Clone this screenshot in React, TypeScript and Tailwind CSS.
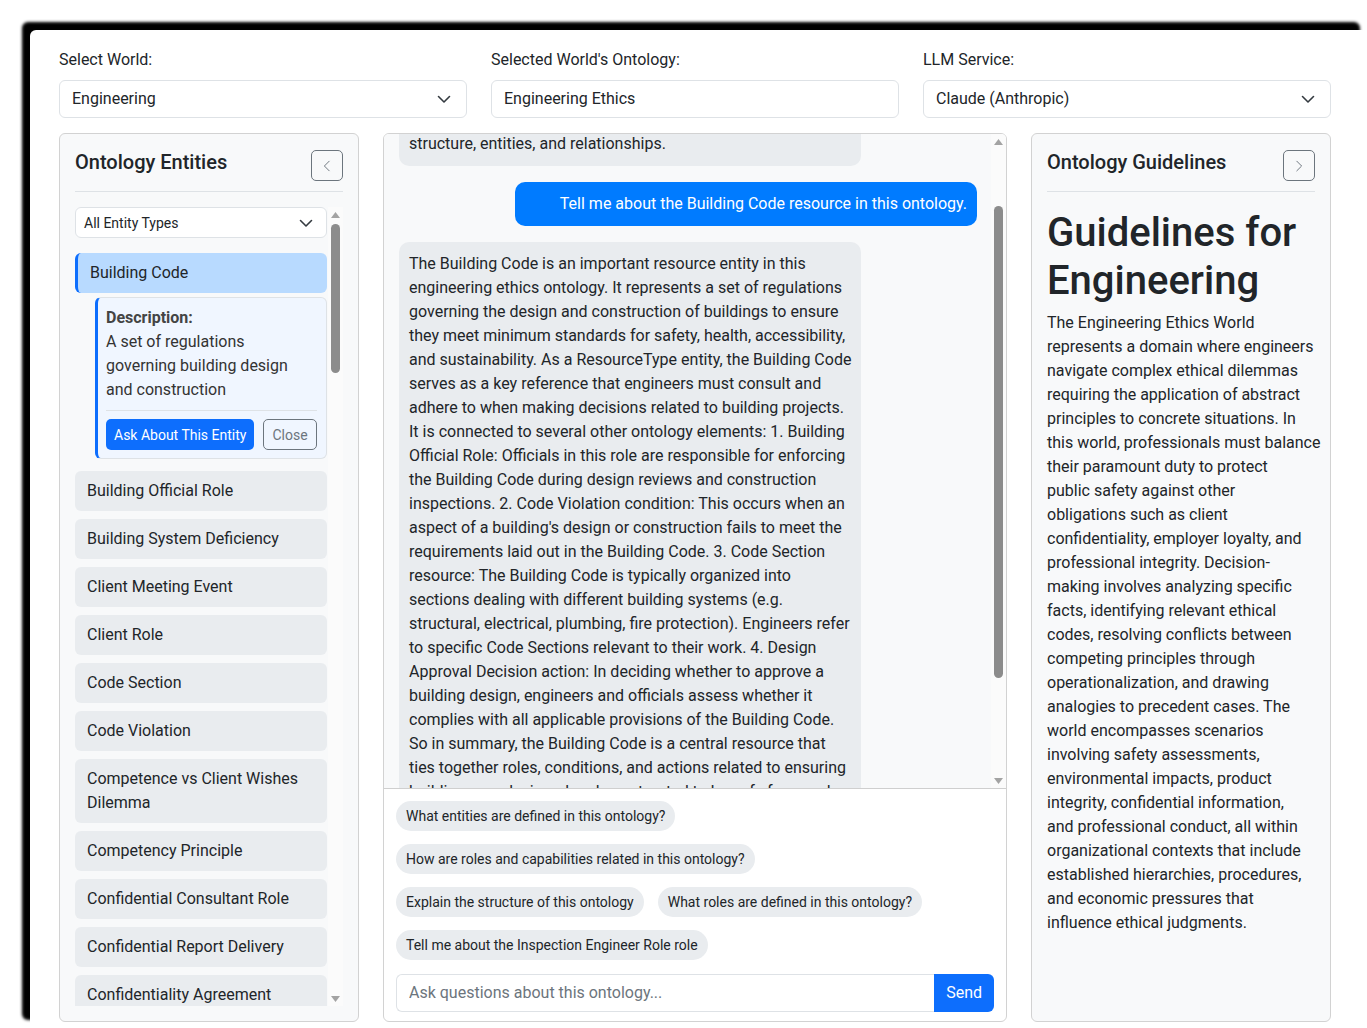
import React from "react";

const entities = [
  "Building Official Role",
  "Building System Deficiency",
  "Client Meeting Event",
  "Client Role",
  "Code Section",
  "Code Violation",
  "Competence vs Client Wishes Dilemma",
  "Competency Principle",
  "Confidential Consultant Role",
  "Confidential Report Delivery",
  "Confidentiality Agreement",
  "Conflict of Interest Condition",
];

const answerLines = [
  "The Building Code is an important resource entity in this",
  "engineering ethics ontology. It represents a set of regulations",
  "governing the design and construction of buildings to ensure",
  "they meet minimum standards for safety, health, accessibility,",
  "and sustainability. As a ResourceType entity, the Building Code",
  "serves as a key reference that engineers must consult and",
  "adhere to when making decisions related to building projects.",
  "It is connected to several other ontology elements: 1. Building",
  "Official Role: Officials in this role are responsible for enforcing",
  "the Building Code during design reviews and construction",
  "inspections. 2. Code Violation condition: This occurs when an",
  "aspect of a building's design or construction fails to meet the",
  "requirements laid out in the Building Code. 3. Code Section",
  "resource: The Building Code is typically organized into",
  "sections dealing with different building systems (e.g.",
  "structural, electrical, plumbing, fire protection). Engineers refer",
  "to specific Code Sections relevant to their work. 4. Design",
  "Approval Decision action: In deciding whether to approve a",
  "building design, engineers and officials assess whether it",
  "complies with all applicable provisions of the Building Code.",
  "So in summary, the Building Code is a central resource that",
  "ties together roles, conditions, and actions related to ensuring",
  "buildings are designed and constructed to be safe for people",
  "and compliant with the law.",
];

const guidelineLines = [
  "The Engineering Ethics World",
  "represents a domain where engineers",
  "navigate complex ethical dilemmas",
  "requiring the application of abstract",
  "principles to concrete situations. In",
  "this world, professionals must balance",
  "their paramount duty to protect",
  "public safety against other",
  "obligations such as client",
  "confidentiality, employer loyalty, and",
  "professional integrity. Decision-",
  "making involves analyzing specific",
  "facts, identifying relevant ethical",
  "codes, resolving conflicts between",
  "competing principles through",
  "operationalization, and drawing",
  "analogies to precedent cases. The",
  "world encompasses scenarios",
  "involving safety assessments,",
  "environmental impacts, product",
  "integrity, confidential information,",
  "and professional conduct, all within",
  "organizational contexts that include",
  "established hierarchies, procedures,",
  "and economic pressures that",
  "influence ethical judgments.",
];

const suggestions = [
  "What entities are defined in this ontology?",
  "How are roles and capabilities related in this ontology?",
  "Explain the structure of this ontology",
  "What roles are defined in this ontology?",
  "Tell me about the Inspection Engineer Role role",
];

function ChevronDown() {
  return (
    <svg width="16" height="16" viewBox="0 0 16 16" fill="none">
      <path d="m2.5 5.5 5.5 5.5 5.5-5.5" stroke="#343a40" strokeWidth="1.6" strokeLinecap="round" strokeLinejoin="round" />
    </svg>
  );
}

function CollapseButton({ dir }: { dir: "left" | "right" }) {
  return (
    <button className="flex h-[31px] w-[32px] shrink-0 items-center justify-center rounded-[5px] border border-[#6c757d] bg-transparent">
      <svg width="14" height="14" viewBox="0 0 16 16" fill="none">
        {dir === "left" ? (
          <path d="M10.5 2.5 5 8l5.5 5.5" stroke="#6c757d" strokeWidth="1.1" strokeLinecap="round" strokeLinejoin="round" />
        ) : (
          <path d="M5.5 2.5 11 8l-5.5 5.5" stroke="#6c757d" strokeWidth="1.1" strokeLinecap="round" strokeLinejoin="round" />
        )}
      </svg>
    </button>
  );
}

// fake native scrollbar: arrows + track + thumb
function ScrollBar({ thumb }: { thumb: string }) {
  return (
    <div className="flex w-[15px] shrink-0 flex-col bg-[#fbfbfb]">
      <div className="flex h-[15px] items-center justify-center">
        <svg width="9" height="6" viewBox="0 0 9 6">
          <path d="M4.5 0 9 6H0z" fill="#a3a3a3" />
        </svg>
      </div>
      <div className="flex-1">
        <div className={`mx-auto w-[9px] rounded-full bg-[#8c8c8c] ${thumb}`} />
      </div>
      <div className="flex h-[15px] items-center justify-center">
        <svg width="9" height="6" viewBox="0 0 9 6">
          <path d="M0 0h9L4.5 6z" fill="#a3a3a3" />
        </svg>
      </div>
    </div>
  );
}

function EntitiesPanel() {
  return (
    <div className="flex w-[300px] shrink-0 flex-col rounded-md border border-[#d2d2d2] bg-[#f8f9fa] px-[15px] pb-[15px] pt-4">
      <div className="flex items-start justify-between border-b border-[#dee2e6] pb-[10px]">
        <h5 className="text-[20px] font-medium leading-6">Ontology Entities</h5>
        <CollapseButton dir="left" />
      </div>

      <div className="mt-[15px] flex min-h-0 flex-1 gap-px">
        <div className="flex min-w-0 flex-1 flex-col gap-2 overflow-hidden">
          <div className="mb-[7px] flex h-[31px] shrink-0 items-center justify-between rounded-md border border-[#dee2e6] bg-white pl-2 pr-[12px] text-sm">
            <span>All Entity Types</span>
            <ChevronDown />
          </div>

          <div className="mb-[4px] shrink-0">
            <div className="rounded-md border-l-[3px] border-[#0d6efd] bg-[#b8daff] py-2 pl-3 leading-6">Building Code</div>
            <div className="ml-5 mt-1 rounded-md border border-l-[3px] border-[#dee2e6] border-l-[#0d6efd] bg-[#f0f6ff] p-2 pr-[9px] leading-6 text-[#333]">
              <div className="font-bold text-[#444]">Description:</div>
              <div>
                A set of regulations
                <br />
                governing building design
                <br />
                and construction
              </div>
              <div className="my-2 border-t border-[#dee2e6]" />
              <div className="flex gap-[9px]">
                <button className="h-[31px] rounded-[5px] bg-[#0d6efd] px-2 text-sm text-white">Ask About This Entity</button>
                <button className="h-[31px] rounded-[5px] border border-[#6c757d] px-2 text-sm text-[#6c757d]">Close</button>
              </div>
            </div>
          </div>

          {entities.map((name) => (
            <div key={name} className="shrink-0 rounded-md bg-[#e9ecef] px-3 py-2 leading-6">
              {name}
            </div>
          ))}
        </div>
        <ScrollBar thumb="mt-[2px] h-[149px]" />
      </div>
    </div>
  );
}

function ChatPanel() {
  return (
    <div className="flex min-w-0 flex-1 flex-col overflow-hidden rounded-md border border-[#d2d2d2] bg-white">
      <div className="flex h-[654px] shrink-0 bg-[#f8f9fa]">
        <div className="min-w-0 flex-1 overflow-hidden pl-[15px] pr-[14px]">
          <div className="-mt-[12px] flex flex-col gap-4 leading-6">
            <div className="w-[80%] rounded-[10px] bg-[#e9ecef] px-[10px] py-[10px]">structure, entities, and relationships.</div>
            <div className="ml-auto w-[80%] rounded-[10px] bg-[#007bff] px-[10px] py-[10px] text-right text-white">
              Tell me about the Building Code resource in this ontology.
            </div>
            <div className="w-[80%] rounded-[10px] bg-[#e9ecef] px-[10px] py-[10px]">
              {answerLines.map((l) => (
                <span key={l} className="block whitespace-nowrap">
                  {l}
                </span>
              ))}
            </div>
          </div>
        </div>
        <ScrollBar thumb="mt-[57px] h-[472px]" />
      </div>

      <div className="flex flex-1 flex-col border-t border-[#cfcfcf] p-3">
        <div className="flex flex-wrap gap-x-[14px] gap-y-[13px]">
          {suggestions.map((s) => (
            <button key={s} className="rounded-full bg-[#e9ecef] px-[10px] py-[5px] text-sm leading-5 text-[#212529]">
              {s}
            </button>
          ))}
        </div>
        <div className="mt-[14px] flex h-[38px]">
          <input
            className="min-w-0 flex-1 rounded-l-md border border-r-0 border-[#dee2e6] px-3 text-base outline-none placeholder:text-[#6c757d]"
            placeholder="Ask questions about this ontology..."
          />
          <button className="rounded-r-md bg-[#0d6efd] px-3 text-base text-white">Send</button>
        </div>
      </div>
    </div>
  );
}

function GuidelinesPanel() {
  return (
    <div className="flex w-[300px] shrink-0 flex-col rounded-md border border-[#d2d2d2] bg-[#f8f9fa] px-[15px] pb-[15px] pt-4">
      <div className="flex items-start justify-between border-b border-[#dee2e6] pb-[10px]">
        <h5 className="text-[20px] font-medium leading-6">Ontology Guidelines</h5>
        <CollapseButton dir="right" />
      </div>
      <h1 className="mt-[17px] text-[40px] font-medium leading-[48px]">
        Guidelines for
        <br />
        Engineering
      </h1>
      <p className="mt-[6px] leading-6">
        {guidelineLines.map((l) => (
          <span key={l} className="block whitespace-nowrap">
            {l}
          </span>
        ))}
      </p>
    </div>
  );
}

function Field({ label, value, chevron }: { label: string; value: string; chevron?: boolean }) {
  return (
    <div className="flex flex-1 flex-col">
      <label className="mb-2 leading-6">{label}</label>
      <div className="flex h-[38px] items-center justify-between rounded-md border border-[#dee2e6] bg-white pl-3 pr-[14px]">
        <span>{value}</span>
        {chevron && <ChevronDown />}
      </div>
    </div>
  );
}

export default function App() {
  return (
    <div className="h-[1028px] w-full overflow-hidden bg-white pl-[30px] pt-[30px] font-['Roboto',sans-serif] text-base text-[#212529]">
      <div className="flex h-[998px] w-[1338px] flex-col rounded-[6px] bg-white pl-[29px] pr-[37px] pt-[18px] shadow-[-8px_-8px_3px_0px_#000]">
        <div className="flex gap-6">
          <Field label="Select World:" value="Engineering" chevron />
          <Field label="Selected World's Ontology:" value="Engineering Ethics" />
          <Field label="LLM Service:" value="Claude (Anthropic)" chevron />
        </div>

        <div className="mt-[15px] flex h-[889px] gap-6">
          <EntitiesPanel />
          <ChatPanel />
          <GuidelinesPanel />
        </div>
      </div>
    </div>
  );
}
